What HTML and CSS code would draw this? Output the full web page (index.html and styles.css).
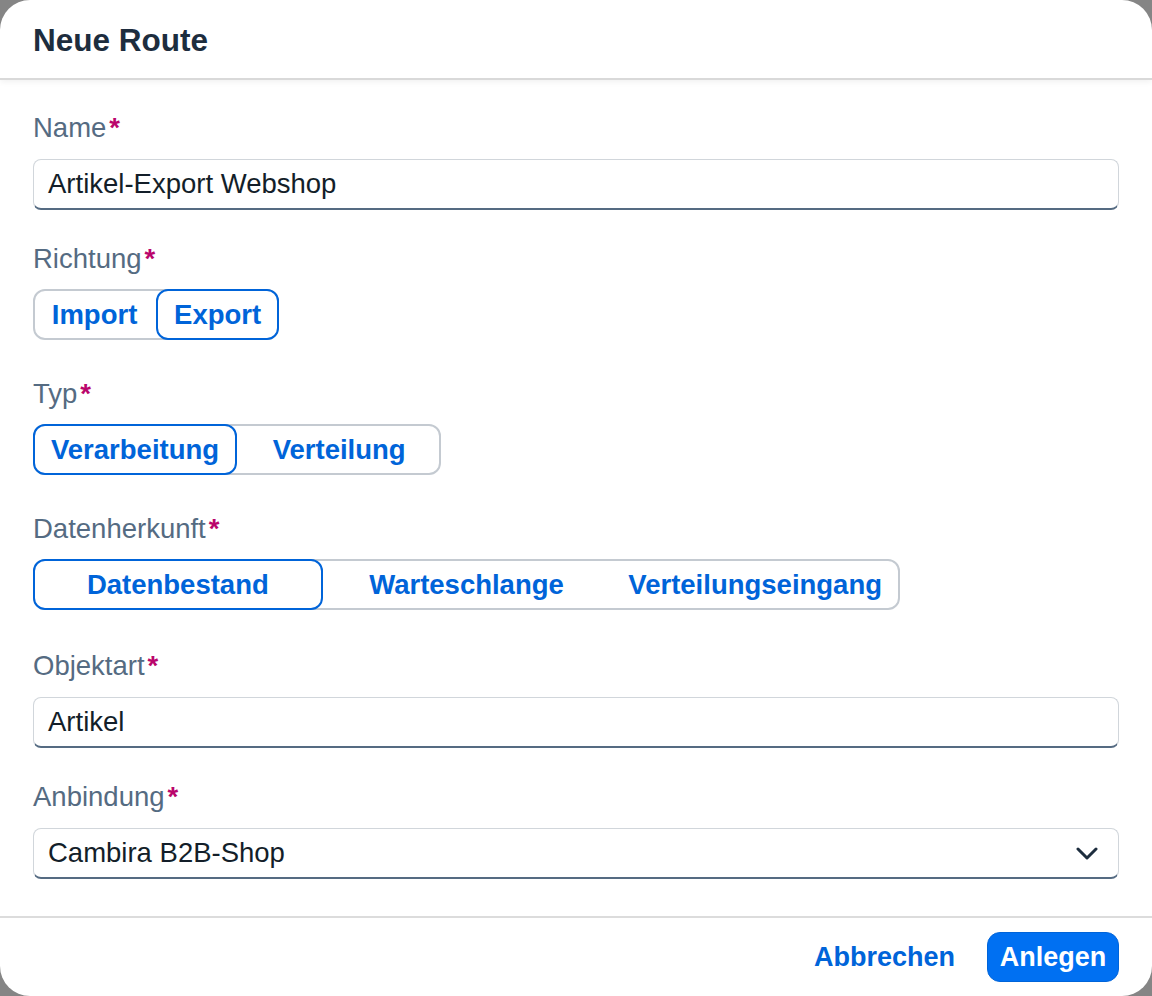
FILE: index.html
```html
<!DOCTYPE html>
<html lang="de">
<head>
<meta charset="utf-8">
<title>Neue Route</title>
<link rel="stylesheet" href="styles.css">
</head>
<body>
<div class="dialog">
  <header class="header">
    <h1 class="title">Neue Route</h1>
  </header>
  <main class="content">
    <div class="field">
      <label class="label">Name<span class="req">*</span></label>
      <div class="input">Artikel-Export Webshop</div>
    </div>
    <div class="field field-seg">
      <label class="label">Richtung<span class="req">*</span></label>
      <div class="seg">
        <button class="seg-item">Import</button>
        <button class="seg-item selected">Export</button>
      </div>
    </div>
    <div class="field field-seg">
      <label class="label">Typ<span class="req">*</span></label>
      <div class="seg">
        <button class="seg-item selected">Verarbeitung</button>
        <button class="seg-item">Verteilung</button>
      </div>
    </div>
    <div class="field field-seg">
      <label class="label">Datenherkunft<span class="req">*</span></label>
      <div class="seg">
        <button class="seg-item selected">Datenbestand</button>
        <button class="seg-item">Warteschlange</button>
        <button class="seg-item">Verteilungseingang</button>
      </div>
    </div>
    <div class="field">
      <label class="label">Objektart<span class="req">*</span></label>
      <div class="input">Artikel</div>
    </div>
    <div class="field">
      <label class="label">Anbindung<span class="req">*</span></label>
      <div class="input select">
        <span>Cambira B2B-Shop</span>
        <svg class="chev" width="22" height="13" viewBox="0 0 22 13" aria-hidden="true">
          <polyline points="2,2 11,11 20,2" fill="none" stroke="#1d2d3e" stroke-width="3" stroke-linecap="round" stroke-linejoin="round"/>
        </svg>
      </div>
    </div>
  </main>
  <footer class="footer">
    <button class="btn btn-ghost">Abbrechen</button>
    <button class="btn btn-primary">Anlegen</button>
  </footer>
</div>
</body>
</html>
```
FILE: styles.css
```css
html, body {
  margin: 0;
  padding: 0;
}
body {
  width: 1152px;
  height: 996px;
  background: #858585;
  font-family: "Liberation Sans", Arial, sans-serif;
  overflow: hidden;
}
.dialog {
  width: 1152px;
  height: 996px;
  background: #ffffff;
  border-radius: 30px;
  display: flex;
  flex-direction: column;
  overflow: hidden;
}
.header {
  height: 78px;
  padding: 0 33px;
  display: flex;
  align-items: center;
  border-bottom: 2px solid #d9d9d9;
  box-shadow: 0 2px 6px rgba(0, 0, 0, 0.06);
  position: relative;
  z-index: 1;
}
.title {
  margin: 0;
  font-size: 31.5px;
  font-weight: 700;
  color: #1d2d3e;
  padding-top: 2px;
}
.content {
  flex: 1;
  padding: 30px 33px 0;
  display: flex;
  flex-direction: column;
  gap: 31px;
}
.field {
  display: flex;
  flex-direction: column;
  align-items: flex-start;
}
.field-seg {
  padding-bottom: 5px;
}
.field-seg + .field:not(.field-seg) {
  margin-top: 2px;
}
.label {
  height: 36px;
  line-height: 36px;
  font-size: 27.5px;
  color: #556b82;
  margin-bottom: 13px;
}
.req {
  color: #ba066c;
  font-weight: 700;
  margin-left: 3px;
}
.input {
  box-sizing: border-box;
  width: 100%;
  height: 51px;
  border: 1px solid #d1d6db;
  border-bottom: 2px solid #556b82;
  border-radius: 8px;
  padding: 0 14px;
  display: flex;
  align-items: center;
  font-size: 27.5px;
  color: #131e29;
  background: #fff;
}
.select {
  justify-content: space-between;
  padding-right: 20px;
}
.chev {
  display: block;
  margin-top: 1px;
}
.seg {
  display: inline-grid;
  grid-auto-flow: column;
  grid-auto-columns: 1fr;
  height: 51px;
  box-sizing: border-box;
  border: 2px solid #c4cad1;
  border-radius: 12px;
  margin-top: -1px;
}
.seg-item {
  margin: -2px 0;
  padding: 0 16px;
  border: 2px solid transparent;
  border-radius: 12px;
  background: transparent;
  font-family: inherit;
  font-size: 27.5px;
  font-weight: 700;
  color: #0064d9;
  white-space: nowrap;
  cursor: pointer;
}
.seg-item:first-child {
  margin-left: -2px;
}
.seg-item:last-child {
  margin-right: -2px;
}
.seg-item.selected {
  border-color: #0064d9;
  background: #fff;
}
.footer {
  height: 78px;
  border-top: 2px solid #dcdcdc;
  display: flex;
  align-items: center;
  justify-content: flex-end;
  gap: 16px;
  padding: 0 33px;
}
.btn {
  height: 50px;
  border-radius: 13px;
  font-family: inherit;
  font-size: 27px;
  font-weight: 700;
  padding: 0 16px;
  cursor: pointer;
}
.btn-ghost {
  border: none;
  background: transparent;
  color: #0064d9;
}
.btn-primary {
  border: 1px solid #0064d9;
  background: #0070f2;
  color: #ffffff;
  width: 132px;
  padding: 0;
}
```
